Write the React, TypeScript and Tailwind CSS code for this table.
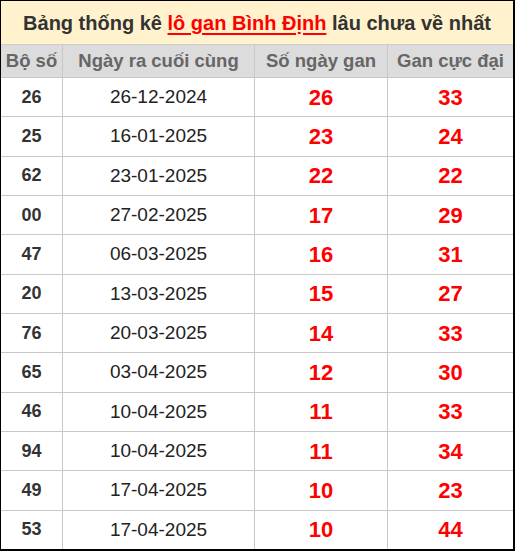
import React from "react";

const rows: [string, string, string, string][] = [
  ["26", "26-12-2024", "26", "33"],
  ["25", "16-01-2025", "23", "24"],
  ["62", "23-01-2025", "22", "22"],
  ["00", "27-02-2025", "17", "29"],
  ["47", "06-03-2025", "16", "31"],
  ["20", "13-03-2025", "15", "27"],
  ["76", "20-03-2025", "14", "33"],
  ["65", "03-04-2025", "12", "30"],
  ["46", "10-04-2025", "11", "33"],
  ["94", "10-04-2025", "11", "34"],
  ["49", "17-04-2025", "10", "23"],
  ["53", "17-04-2025", "10", "44"],
];

export default function App() {
  return (
    <div
      className="w-[515px] h-[551px] bg-white border-l border-t border-black border-r-[2px] border-b-[2px] flex flex-col overflow-hidden"
      style={{ fontFamily: '"Liberation Sans", Arial, sans-serif' }}
    >
      <div className="h-[44px] shrink-0 bg-[#fff2cc] border-b border-[#cccccc] flex items-center justify-center text-[20px] font-bold text-[#333333]">
        <span className="whitespace-pre">Bảng thống kê </span>
        <span className="text-[#ff0000] underline decoration-2 underline-offset-[3px]">lô gan Bình Định</span>
        <span className="whitespace-pre"> lâu chưa về nhất</span>
      </div>
      <div className="h-[33px] shrink-0 grid grid-cols-[62px_192px_133px_1fr] bg-[#dcdcdc] border-b border-[#c8c8c8] text-[18.5px] font-bold text-[#666666]">
        <div className="flex items-center justify-center border-r border-[#c8c8c8]">Bộ số</div>
        <div className="flex items-center justify-center border-r border-[#c8c8c8]">Ngày ra cuối cùng</div>
        <div className="flex items-center justify-center border-r border-[#c8c8c8]">Số ngày gan</div>
        <div className="flex items-center justify-center">Gan cực đại</div>
      </div>
      <div className="flex-1 flex flex-col">
        {rows.map((r, i) => (
          <div
            key={i}
            className={`flex-1 grid grid-cols-[62px_192px_133px_1fr] ${i < rows.length - 1 ? "border-b border-[#c8c8c8]" : ""}`}
          >
            <div className="flex items-center justify-center border-r border-[#c8c8c8] text-[18px] font-bold text-[#333333]">{r[0]}</div>
            <div className="flex items-center justify-center border-r border-[#c8c8c8] text-[19px] text-[#222222]">{r[1]}</div>
            <div className="flex items-center justify-center border-r border-[#c8c8c8] text-[22px] font-bold text-[#ff0000]">{r[2]}</div>
            <div className="flex items-center justify-center text-[22px] font-bold text-[#ff0000]">{r[3]}</div>
          </div>
        ))}
      </div>
    </div>
  );
}
